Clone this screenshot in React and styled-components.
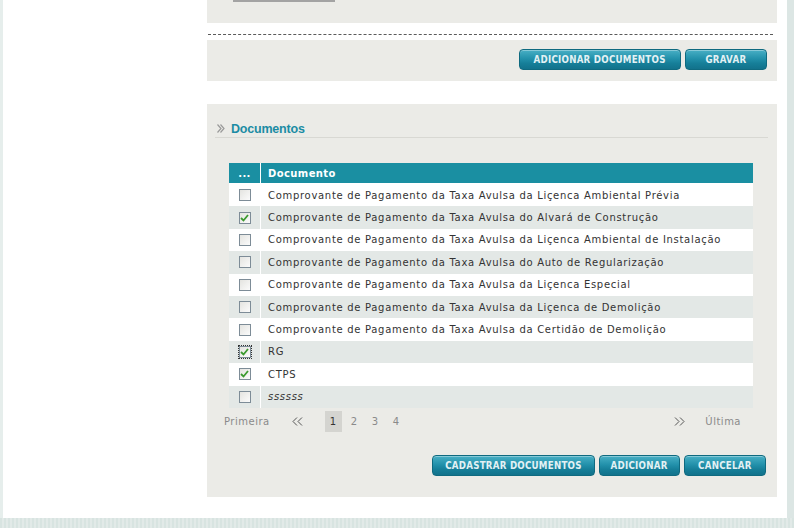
import React from 'react';
import styled, { createGlobalStyle } from 'styled-components';

const Global = createGlobalStyle`
  html, body { margin: 0; padding: 0; background: #fff; }
  body { font-family: "DejaVu Sans", Verdana, sans-serif; }
`;

const Page = styled.div`
  width: 794px;
  height: 528px;
  overflow: hidden;
  display: flex;
  flex-direction: column;
`;

const Frame = styled.div`
  flex: 0 0 518px;
  display: flex;
  border-left: 3px solid #e6eeec;
`;

const Sidebar = styled.div`
  width: 204px;
  flex: none;
  background: #fff;
`;

const Content = styled.div`
  width: 570px;
  flex: none;
  display: flex;
  flex-direction: column;
`;

const RightGap = styled.div`
  flex: 1;
  background: #fff;
`;

const RightStrip = styled.div`
  width: 7px;
  flex: none;
  background: #dce6e4;
`;

const BottomStrip = styled.div`
  flex: 0 0 10px;
  background: repeating-linear-gradient(90deg, #d8e4e1 0 2px, #e2eae8 2px 4px);
`;

const TopBox = styled.div`
  height: 23px;
  background: #ebebe7;
  padding-left: 26px;
`;

const InputEdge = styled.div`
  width: 102px;
  height: 2px;
  background: #a3a3a3;
`;

const Dashed = styled.div`
  margin: 11px 4px 0 1px;
  border-top: 1px dashed #5a5a5a;
  height: 0;
`;

const ActionBar = styled.div`
  margin-top: 5px;
  height: 41px;
  box-sizing: border-box;
  background: #ebebe7;
  display: flex;
  justify-content: flex-end;
  align-items: flex-start;
  padding: 9px ${p => p.$right}px 0 0;
  gap: 4px;
`;

const Button = styled.button`
  width: ${p => p.$w}px;
  height: 21px;
  box-sizing: border-box;
  padding: 0;
  border: 1px solid #0f6a80;
  border-radius: 4px;
  background: linear-gradient(#48afc5 0%, #2391ab 45%, #167f99 70%, #12728b 100%);
  box-shadow: inset 0 1px 0 rgba(255, 255, 255, 0.35);
  color: #e3f1f4;
  font-family: "DejaVu Sans", sans-serif;
  font-weight: bold;
  font-size: 11px;
  letter-spacing: 0.3px;
  text-transform: uppercase;
  cursor: pointer;
  display: flex;
  align-items: center;
  justify-content: center;
  overflow: hidden;
`;

const Label = styled.span`
  display: inline-block;
  white-space: nowrap;
  transform: scaleX(0.79);
`;

const DocBox = styled.div`
  margin-top: 23px;
  height: 393px;
  box-sizing: border-box;
  background: #ebebe7;
  padding-top: 16px;
  display: flex;
  flex-direction: column;
`;

const TitleRow = styled.div`
  margin: 0 9px 0 8px;
  height: 17px;
  border-bottom: 1px solid #d8d8d3;
  display: flex;
  align-items: center;
  gap: 6px;
  padding-left: 2px;
`;

const Title = styled.h2`
  margin: 0;
  font-family: "Liberation Sans", Arial, sans-serif;
  font-weight: bold;
  font-size: 12.5px;
  letter-spacing: -0.2px;
  color: #1b8ca4;
`;

const TableWrap = styled.div`
  margin: 25px 24px 0 22px;
  background: #fff;
`;

const HeadRow = styled.div`
  display: flex;
  height: 20px;
  background: #1a8fa2;
  margin-bottom: 1px;
`;

const HeadCell = styled.div`
  box-sizing: border-box;
  display: flex;
  align-items: center;
  justify-content: ${p => (p.$first ? 'center' : 'flex-start')};
  width: ${p => (p.$first ? '32px' : 'auto')};
  flex: ${p => (p.$first ? 'none' : '1')};
  border-right: ${p => (p.$first ? '1px solid #fff' : 'none')};
  padding-left: ${p => (p.$first ? '0' : '7px')};
  color: #fff;
  font-weight: bold;
  font-size: 10px;
  letter-spacing: 0.4px;
`;

const Row = styled.div`
  display: flex;
  height: 22.4px;
  background: ${p => (p.$alt ? '#e3e8e6' : '#fff')};
`;

const CheckCell = styled.div`
  width: 32px;
  flex: none;
  box-sizing: border-box;
  border-right: 1px solid #fff;
  display: flex;
  align-items: center;
  justify-content: center;
`;

const TextCell = styled.div`
  flex: 1;
  display: flex;
  align-items: center;
  padding-left: 7px;
  font-size: 10px;
  letter-spacing: 0.7px;
  color: #333;
  font-style: ${p => (p.$italic ? 'italic' : 'normal')};
`;

const Box = styled.span`
  width: 12px;
  height: 12px;
  box-sizing: border-box;
  border: 1px solid #7d8c97;
  background: linear-gradient(135deg, #e4e4e0, #fbfbfb);
  display: flex;
  align-items: center;
  justify-content: center;
  outline: ${p => (p.$focus ? '1px dotted #333' : 'none')};
  outline-offset: 0;
`;

const Pager = styled.div`
  margin: 3px 36px 0 17px;
  height: 21px;
  display: flex;
  align-items: center;
  font-size: 10px;
  letter-spacing: 0.5px;
  color: #8a8a8a;
`;

const PagerLink = styled.span`
  margin-right: ${p => p.$mr || 0}px;
`;

const Arrow = styled.span`
  display: flex;
  margin-right: ${p => p.$mr || 0}px;
`;

const PageNum = styled.span`
  width: 17px;
  height: 21px;
  display: flex;
  align-items: center;
  justify-content: center;
  margin-right: 4px;
  background: ${p => (p.$active ? '#d4d4d0' : 'transparent')};
  color: ${p => (p.$active ? '#333' : '#8a8a8a')};
`;

const Spacer = styled.span`
  flex: 1;
`;

const BottomBar = styled.div`
  margin-top: 23px;
  display: flex;
  justify-content: flex-end;
  gap: 4px;
  padding-right: 11px;
`;

const Check = () => (
  <svg width="9" height="8" viewBox="0 0 9 8">
    <path d="M1 4 L3.5 6.5 L8 1" fill="none" stroke="#3b9a2f" strokeWidth="1.8" />
  </svg>
);

const TitleArrow = () => (
  <svg width="8" height="9" viewBox="0 0 8 9">
    <path d="M0.5 0.5 L4 4.5 L0.5 8.5" fill="none" stroke="#9a9a9a" strokeWidth="1.2" />
    <path d="M3.5 0.5 L7 4.5 L3.5 8.5" fill="none" stroke="#9a9a9a" strokeWidth="1.2" />
  </svg>
);

const DoubleLeft = () => (
  <svg width="11" height="9" viewBox="0 0 11 9">
    <path d="M5 0.5 L1 4.5 L5 8.5 M10 0.5 L6 4.5 L10 8.5" fill="none" stroke="#555" strokeWidth="1" />
  </svg>
);

const DoubleRight = () => (
  <svg width="11" height="9" viewBox="0 0 11 9">
    <path d="M1 0.5 L5 4.5 L1 8.5 M6 0.5 L10 4.5 L6 8.5" fill="none" stroke="#555" strokeWidth="1" />
  </svg>
);

const docs = [
  { name: 'Comprovante de Pagamento da Taxa Avulsa da Liçenca Ambiental Prévia' },
  { name: 'Comprovante de Pagamento da Taxa Avulsa do Alvará de Construção', checked: true },
  { name: 'Comprovante de Pagamento da Taxa Avulsa da Liçenca Ambiental de Instalação' },
  { name: 'Comprovante de Pagamento da Taxa Avulsa do Auto de Regularização' },
  { name: 'Comprovante de Pagamento da Taxa Avulsa da Liçenca Especial' },
  { name: 'Comprovante de Pagamento da Taxa Avulsa da Liçenca de Demolição' },
  { name: 'Comprovante de Pagamento da Taxa Avulsa da Certidão de Demolição' },
  { name: 'RG', checked: true, focus: true },
  { name: 'CTPS', checked: true },
  { name: 'ssssss', italic: true },
];

export default function App() {
  return (
    <>
      <Global />
      <Page>
        <Frame>
          <Sidebar />
          <Content>
            <TopBox>
              <InputEdge />
            </TopBox>
            <Dashed />
            <ActionBar $right={10}>
              <Button $w={162}><Label>Adicionar Documentos</Label></Button>
              <Button $w={82}><Label>Gravar</Label></Button>
            </ActionBar>
            <DocBox>
              <TitleRow>
                <TitleArrow />
                <Title>Documentos</Title>
              </TitleRow>
              <TableWrap>
                <HeadRow>
                  <HeadCell $first>...</HeadCell>
                  <HeadCell>Documento</HeadCell>
                </HeadRow>
                {docs.map((d, i) => (
                  <Row key={i} $alt={i % 2 === 1}>
                    <CheckCell>
                      <Box $focus={d.focus}>{d.checked && <Check />}</Box>
                    </CheckCell>
                    <TextCell $italic={d.italic}>{d.name}</TextCell>
                  </Row>
                ))}
              </TableWrap>
              <Pager>
                <PagerLink $mr={22}>Primeira</PagerLink>
                <Arrow $mr={22}><DoubleLeft /></Arrow>
                <PageNum $active>1</PageNum>
                <PageNum>2</PageNum>
                <PageNum>3</PageNum>
                <PageNum>4</PageNum>
                <Spacer />
                <Arrow $mr={20}><DoubleRight /></Arrow>
                <PagerLink>Última</PagerLink>
              </Pager>
              <BottomBar>
                <Button $w={163}><Label>Cadastrar Documentos</Label></Button>
                <Button $w={81}><Label>Adicionar</Label></Button>
                <Button $w={82}><Label>Cancelar</Label></Button>
              </BottomBar>
            </DocBox>
          </Content>
          <RightGap />
          <RightStrip />
        </Frame>
        <BottomStrip />
      </Page>
    </>
  );
}
